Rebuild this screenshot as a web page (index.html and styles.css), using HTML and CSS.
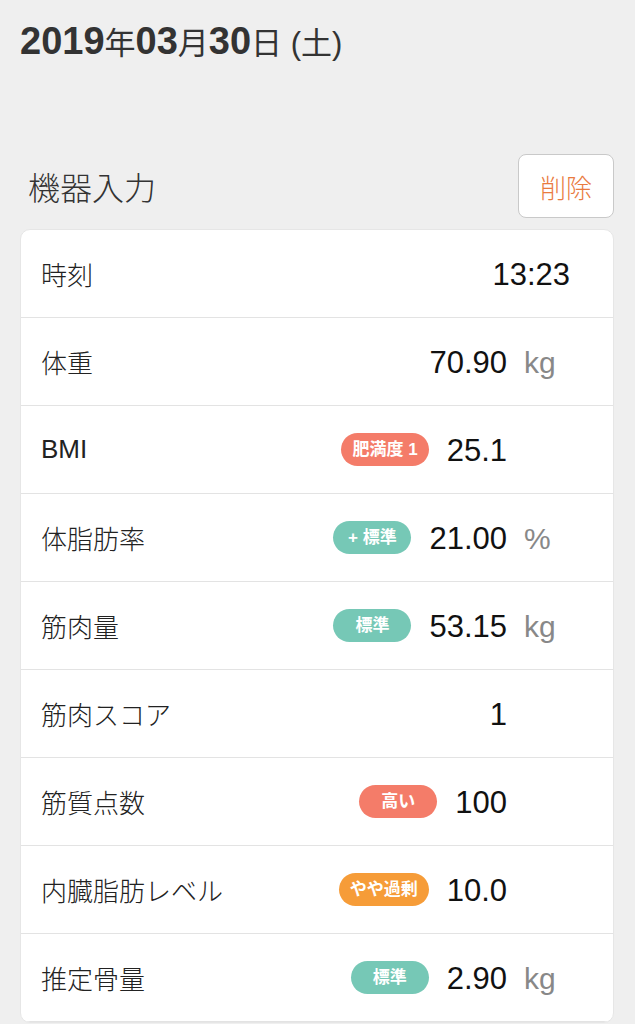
FILE: index.html
```html
<!DOCTYPE html>
<html lang="ja">
<head>
  <meta charset="UTF-8" />
  <title>機器入力</title>
  <link rel="stylesheet" href="styles.css">
</head>
<body>

  <div class="date">
    <span class="num">2019</span>年<span class="num">03</span>月<span class="num">30</span>日 (土)
  </div>

  <div class="section-head">
    <h2>機器入力</h2>
    <button class="delete-btn">削除</button>
  </div>

  <div class="card">
    <div class="row">
      <div class="label">時刻</div>
      <div class="value">13:23</div>
    </div>
    <div class="row">
      <div class="label">体重</div>
      <div class="value">70.90</div>
      <div class="unit">kg</div>
    </div>
    <div class="row">
      <div class="label">BMI</div>
      <span class="badge red">肥満度 1</span>
      <div class="value">25.1</div>
      <div class="unit"></div>
    </div>
    <div class="row">
      <div class="label">体脂肪率</div>
      <span class="badge green">+ 標準</span>
      <div class="value">21.00</div>
      <div class="unit">%</div>
    </div>
    <div class="row">
      <div class="label">筋肉量</div>
      <span class="badge green">標準</span>
      <div class="value">53.15</div>
      <div class="unit">kg</div>
    </div>
    <div class="row">
      <div class="label">筋肉スコア</div>
      <div class="value">1</div>
      <div class="unit"></div>
    </div>
    <div class="row">
      <div class="label">筋質点数</div>
      <span class="badge red">高い</span>
      <div class="value">100</div>
      <div class="unit"></div>
    </div>
    <div class="row">
      <div class="label">内臓脂肪レベル</div>
      <span class="badge orange">やや過剰</span>
      <div class="value">10.0</div>
      <div class="unit"></div>
    </div>
    <div class="row">
      <div class="label">推定骨量</div>
      <span class="badge green">標準</span>
      <div class="value">2.90</div>
      <div class="unit">kg</div>
    </div>
  </div>

</body>
</html>
```

FILE: styles.css
```css
body {
  font-family: 'Liberation Sans', 'Noto Sans CJK JP', sans-serif;
  background: #efefef;
  margin: 0;
  padding: 0 21px 0 20px;
}

.date {
  font-size: 31px;
  line-height: 40px;
  color: #333;
  padding-top: 21px;
  white-space: nowrap;
}

.date .num {
  font-size: 38px;
  font-weight: bold;
}

.section-head {
  display: flex;
  justify-content: space-between;
  align-items: center;
  margin-top: 90px;
  margin-bottom: 11px;
}

.section-head h2 {
  margin: 0;
  padding-left: 8px;
  font-size: 32px;
  font-weight: 300;
  color: #333;
}

.delete-btn {
  width: 96px;
  height: 64px;
  background: white;
  border: 1px solid #c9c9c9;
  border-radius: 8px;
  color: #e97b3f;
  font-family: inherit;
  font-size: 26px;
  font-weight: 300;
  padding: 0;
}

.card {
  background: white;
  border: 1px solid #e6e6e6;
  border-radius: 10px;
  overflow: hidden;
}

.row {
  box-sizing: border-box;
  height: 88px;
  display: flex;
  align-items: center;
  padding: 0 43px 0 20px;
  border-bottom: 1px solid #e3e3e3;
}

.label {
  flex: 1;
  font-size: 26px;
  font-weight: 300;
  color: #222;
}

.value {
  font-size: 31px;
  color: #111;
  padding-top: 3px;
}

.unit {
  width: 46px;
  margin-left: 17px;
  padding-top: 3px;
  font-size: 30px;
  color: #888;
}

.badge {
  box-sizing: border-box;
  min-width: 78px;
  height: 33px;
  line-height: 33px;
  padding: 0 11px;
  margin-right: 18px;
  border-radius: 17px;
  color: white;
  font-size: 17px;
  font-weight: bold;
  text-align: center;
  white-space: nowrap;
}

.badge.red {
  background: #f47c69;
}

.badge.green {
  background: #76c8b6;
}

.badge.orange {
  background: #f69c38;
}
```
